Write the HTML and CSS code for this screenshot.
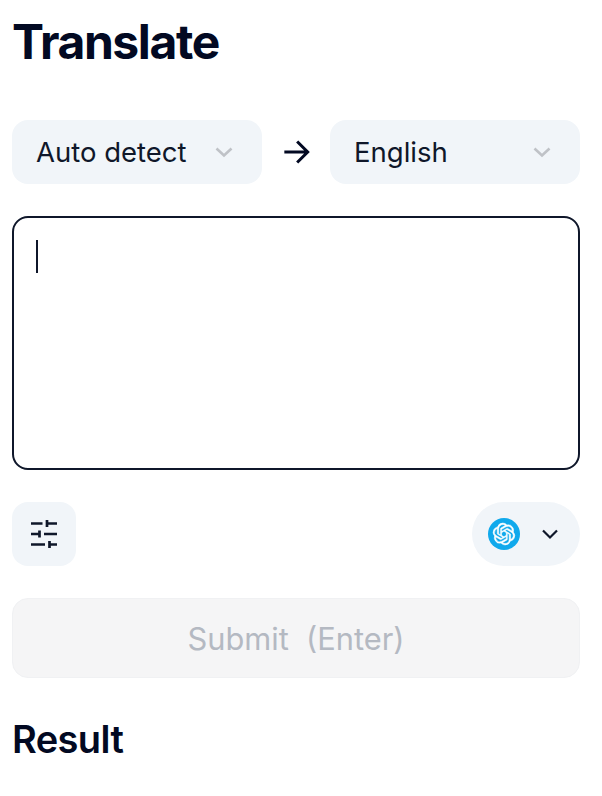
FILE: index.html
```html
<!DOCTYPE html>
<html lang="en">
<head>
    <meta charset="UTF-8">
    <meta name="viewport" content="width=device-width, initial-scale=1.0">
    <title>Translate</title>
    <link rel="stylesheet" href="styles.css">
</head>
<body>
    <div class="app">
        <h1>Translate</h1>

        <div class="lang-row">
            <button class="lang-select">
                <span>Auto detect</span>
                <svg class="chevron" viewBox="0 0 24 24" width="24" height="24"><path d="M4.5 8.5 12 15.5 19.5 8.5"/></svg>
            </button>
            <svg class="arrow" viewBox="0 0 24 24" width="28" height="28"><path d="M2 12H22M13 3 22 12 13 21"/></svg>
            <button class="lang-select">
                <span>English</span>
                <svg class="chevron" viewBox="0 0 24 24" width="24" height="24"><path d="M4.5 8.5 12 15.5 19.5 8.5"/></svg>
            </button>
        </div>

        <div class="input-box"><span class="caret"></span></div>

        <div class="tools-row">
            <button class="icon-btn">
                <svg class="sliders" viewBox="0 0 28 28" width="28" height="28">
                    <path d="M1 3.500H12.500M17 3.500H27M17 0V7"/>
                    <path d="M1 14H9M14 14H27M9.500 10.500V17.500"/>
                    <path d="M1 24.500H15M19.500 24.500H27M19.500 21V28"/>
                </svg>
            </button>
            <button class="model-btn">
                <svg class="model-logo" viewBox="0 0 32 32" width="32" height="32">
                    <circle class="logo-bg" cx="16" cy="16" r="16"/>
                    <path class="logo-knot" transform="translate(4.800 4.800) scale(.5463)" d="M37.532 16.87a9.963 9.963 0 0 0-.856-8.184 10.078 10.078 0 0 0-10.855-4.835A9.964 9.964 0 0 0 18.306.5a10.079 10.079 0 0 0-9.614 6.977 9.967 9.967 0 0 0-6.664 4.834 10.08 10.08 0 0 0 1.24 11.817 9.965 9.965 0 0 0 .856 8.185 10.079 10.079 0 0 0 10.855 4.835 9.965 9.965 0 0 0 7.516 3.35 10.078 10.078 0 0 0 9.617-6.981 9.967 9.967 0 0 0 6.663-4.834 10.079 10.079 0 0 0-1.243-11.813ZM22.498 37.886a7.474 7.474 0 0 1-4.799-1.735c.061-.033.168-.091.237-.134l7.964-4.6a1.294 1.294 0 0 0 .655-1.134V19.054l3.366 1.944a.12.12 0 0 1 .066.092v9.299a7.505 7.505 0 0 1-7.49 7.496ZM6.392 31.006a7.471 7.471 0 0 1-.894-5.023c.06.036.162.099.237.141l7.964 4.6a1.297 1.297 0 0 0 1.308 0l9.724-5.614v3.888a.12.12 0 0 1-.048.103l-8.051 4.649a7.504 7.504 0 0 1-10.24-2.744ZM4.297 13.62A7.469 7.469 0 0 1 8.2 10.333c0 .068-.004.19-.004.274v9.201a1.294 1.294 0 0 0 .654 1.132l9.723 5.614-3.366 1.944a.12.12 0 0 1-.114.01L7.04 23.856a7.504 7.504 0 0 1-2.743-10.237Zm27.658 6.437-9.724-5.615 3.367-1.943a.121.121 0 0 1 .113-.01l8.052 4.648a7.498 7.498 0 0 1-1.158 13.528v-9.476a1.293 1.293 0 0 0-.65-1.132Zm3.35-5.043c-.059-.037-.162-.099-.236-.141l-7.965-4.6a1.298 1.298 0 0 0-1.308 0l-9.723 5.614v-3.888a.12.12 0 0 1 .048-.103l8.05-4.645a7.497 7.497 0 0 1 11.135 7.763Zm-21.063 6.929-3.367-1.944a.12.12 0 0 1-.065-.092v-9.299a7.497 7.497 0 0 1 12.293-5.756 6.94 6.94 0 0 0-.236.134l-7.965 4.6a1.294 1.294 0 0 0-.654 1.132l-.006 11.225Zm1.829-3.943 4.33-2.501 4.332 2.5v5l-4.331 2.5-4.331-2.5V18Z"/>
                </svg>
                <svg class="model-chevron" viewBox="0 0 16 16" width="16" height="16"><path d="M1 4.500 8 11.500 15 4.500"/></svg>
            </button>
        </div>

        <button class="submit-btn" disabled>Submit&nbsp; (Enter)</button>

        <h2>Result</h2>
    </div>
</body>
</html>
```

FILE: styles.css
```css
body {
    margin: 0;
    background: #fff;
    color: #0f172a;
    font-family: Inter, "Liberation Sans", sans-serif;
}

.app {
    display: flex;
    flex-direction: column;
    padding: 12px 22px 0 12px;
    height: 784px;
    overflow: hidden;
}

h1 {
    margin: 0 0 48px;
    font-size: 48px;
    line-height: 60px;
    font-weight: 700;
    letter-spacing: -1.4px;
    color: #020922;
}

button {
    font-family: inherit;
    border: none;
    cursor: pointer;
}

.lang-row {
    display: flex;
    align-items: center;
    justify-content: space-between;
    margin-bottom: 32px;
}

.lang-select {
    display: flex;
    align-items: center;
    justify-content: space-between;
    width: 250px;
    height: 64px;
    padding: 0 26px 0 24px;
    background: #f1f5f9;
    border-radius: 16px;
    font-size: 27.500px;
    color: #0f172a;
}

.chevron path {
    fill: none;
    stroke: #bfc2c7;
    stroke-width: 2.600;
}

.arrow path {
    fill: none;
    stroke: #020922;
    stroke-width: 2.600;
}

.input-box {
    box-sizing: border-box;
    height: 254px;
    padding: 22px 22px;
    border: 2px solid #0f172a;
    border-radius: 16px;
    margin-bottom: 32px;
}

.caret {
    display: block;
    width: 2px;
    height: 33px;
    background: #0f172a;
}

.tools-row {
    display: flex;
    align-items: center;
    justify-content: space-between;
    margin-bottom: 32px;
}

.icon-btn {
    display: flex;
    align-items: center;
    justify-content: center;
    width: 64px;
    height: 64px;
    padding: 0;
    background: #f1f5f9;
    border-radius: 16px;
}

.sliders path {
    fill: none;
    stroke: #0f172a;
    stroke-width: 2.700;
}

.model-btn {
    display: flex;
    align-items: center;
    gap: 22px;
    width: 108px;
    height: 64px;
    padding: 0 0 0 16px;
    background: #f1f5f9;
    border-radius: 32px;
}

.logo-bg {
    fill: #10a9ec;
}

.logo-knot {
    fill: #fff;
    stroke: #fff;
    stroke-width: 1;
}

.model-chevron path {
    fill: none;
    stroke: #0f172a;
    stroke-width: 2.200;
}

.submit-btn {
    box-sizing: border-box;
    flex: none;
    height: 80px;
    background: #f5f5f6;
    border: 1px solid #f0f1f3;
    border-radius: 16px;
    font-size: 30.800px;
    color: #b4b9c2;
}

h2 {
    margin: 29px 0 0;
    font-size: 38px;
    line-height: 64px;
    font-weight: 600;
    letter-spacing: -.6px;
    color: #020922;
}
```
